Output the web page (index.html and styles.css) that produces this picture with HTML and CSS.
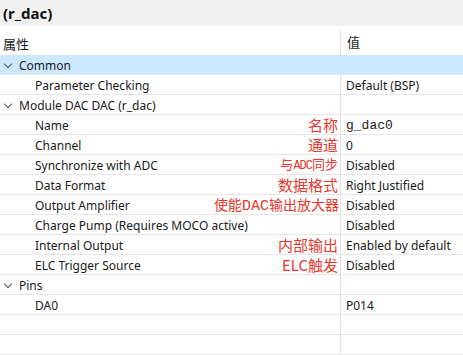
FILE: index.html
```html
<!DOCTYPE html>
<html>
<head>
<meta charset="utf-8">
<link rel="stylesheet" href="styles.css">
</head>
<body>
<div class="panel">
  <div class="title">(r_dac)</div>
  <div class="table">
    <div class="head">
      <div class="c1">属性</div>
      <div class="c2">值</div>
    </div>
    <div class="row sel"><div class="c1 l0"><span class="chev"></span>Common</div><div class="c2"></div></div>
    <div class="row"><div class="c1 l1">Parameter Checking</div><div class="c2">Default (BSP)</div></div>
    <div class="row"><div class="c1 l0"><span class="chev"></span>Module DAC DAC (r_dac)</div><div class="c2"></div></div>
    <div class="row"><div class="c1 l1">Name<span class="note">名称</span></div><div class="c2 mono">g_dac0</div></div>
    <div class="row"><div class="c1 l1">Channel<span class="note">通道</span></div><div class="c2">0</div></div>
    <div class="row"><div class="c1 l1">Synchronize with ADC<span class="note small">与<span class="lat">ADC</span>同步</span></div><div class="c2">Disabled</div></div>
    <div class="row"><div class="c1 l1">Data Format<span class="note">数据格式</span></div><div class="c2">Right Justified</div></div>
    <div class="row"><div class="c1 l1">Output Amplifier<span class="note mid">使能<span class="lat2">DAC</span>输出放大器</span></div><div class="c2">Disabled</div></div>
    <div class="row"><div class="c1 l1">Charge Pump (Requires MOCO active)</div><div class="c2">Disabled</div></div>
    <div class="row"><div class="c1 l1">Internal Output<span class="note">内部输出</span></div><div class="c2">Enabled by default</div></div>
    <div class="row"><div class="c1 l1">ELC Trigger Source<span class="note">ELC触发</span></div><div class="c2">Disabled</div></div>
    <div class="row"><div class="c1 l0"><span class="chev"></span>Pins</div><div class="c2"></div></div>
    <div class="row"><div class="c1 l1">DA0</div><div class="c2">P014</div></div>
    <div class="row"><div class="c1"></div><div class="c2"></div></div>
    <div class="row"><div class="c1"></div><div class="c2"></div></div>
    <div class="fill"><div class="c1"></div><div class="c2"></div></div>
  </div>
</div>
</body>
</html>
```
FILE: styles.css
```css
html, body {
  margin: 0;
  padding: 0;
  background: #ffffff;
}
body {
  width: 463px;
  height: 355px;
  overflow: hidden;
  font-family: "Noto Sans", "Noto Sans CJK SC", sans-serif;
  font-size: 12px;
  color: #1a1a1a;
}
.panel {
  display: flex;
  flex-direction: column;
  height: 355px;
}
.title {
  height: 27px;
  background: #f0f0f0;
  font-weight: bold;
  font-size: 15px;
  line-height: 26px;
  padding-left: 3px;
  color: #111;
  box-sizing: border-box;
}
.table {
  flex: 1;
  display: flex;
  flex-direction: column;
}
.head {
  height: 29px;
  display: flex;
  padding-top: 5px;
  box-sizing: border-box;
}
.head .c1 {
  width: 340px;
  padding-left: 3px;
  line-height: 22px;
  font-family: "Noto Sans CJK SC", sans-serif;
  font-size: 13px;
  box-sizing: border-box;
}
.head .c2 {
  flex: 1;
  border-left: 1px solid #e3e3e3;
  padding-left: 6px;
  line-height: 22px;
  font-family: "Noto Sans CJK SC", sans-serif;
  font-size: 13px;
}
.row {
  height: 20px;
  display: flex;
  border-bottom: 1px solid #e6e6e6;
  box-sizing: border-box;
}
.row.sel {
  background: #cce8ff;
}
.c1 {
  width: 340px;
  display: flex;
  align-items: center;
  white-space: nowrap;
  box-sizing: border-box;
  line-height: 19px;
  padding-top: 2px;
}
.row .c2 {
  flex: 1;
  border-left: 1px solid #e3e3e3;
  padding-left: 5px;
  padding-top: 1px;
  line-height: 19px;
  white-space: nowrap;
  box-sizing: border-box;
}
.row.sel .c2 {
  border-left-color: #cce8ff;
}
.l0 {
  padding-left: 5px;
}
.l1 {
  padding-left: 35px;
}
.chev {
  width: 5px;
  height: 5px;
  border-right: 1.5px solid #555;
  border-bottom: 1.5px solid #555;
  transform: rotate(45deg);
  margin-right: 8px;
  margin-top: -4px;
  margin-left: 0;
}
.mono {
  font-family: "Liberation Mono", monospace;
  font-size: 13px;
}
.note {
  margin-left: auto;
  margin-right: 2px;
  margin-top: -2px;
  color: #e8372c;
  font-family: "Noto Sans CJK SC", sans-serif;
  font-size: 15px;
  line-height: 18px;
}
.note.small {
  font-size: 13px;
}
.note.mid {
  font-size: 14px;
  margin-right: 1px;
  margin-top: 0;
  line-height: 17px;
}
.lat {
  font-family: "Liberation Mono", monospace;
  font-size: 12px;
  letter-spacing: -1px;
}
.lat2 {
  font-family: "Liberation Mono", monospace;
  font-size: 15px;
}
.fill {
  flex: 1;
  display: flex;
}
.fill .c2 {
  flex: 1;
  border-left: 1px solid #e3e3e3;
}
```
